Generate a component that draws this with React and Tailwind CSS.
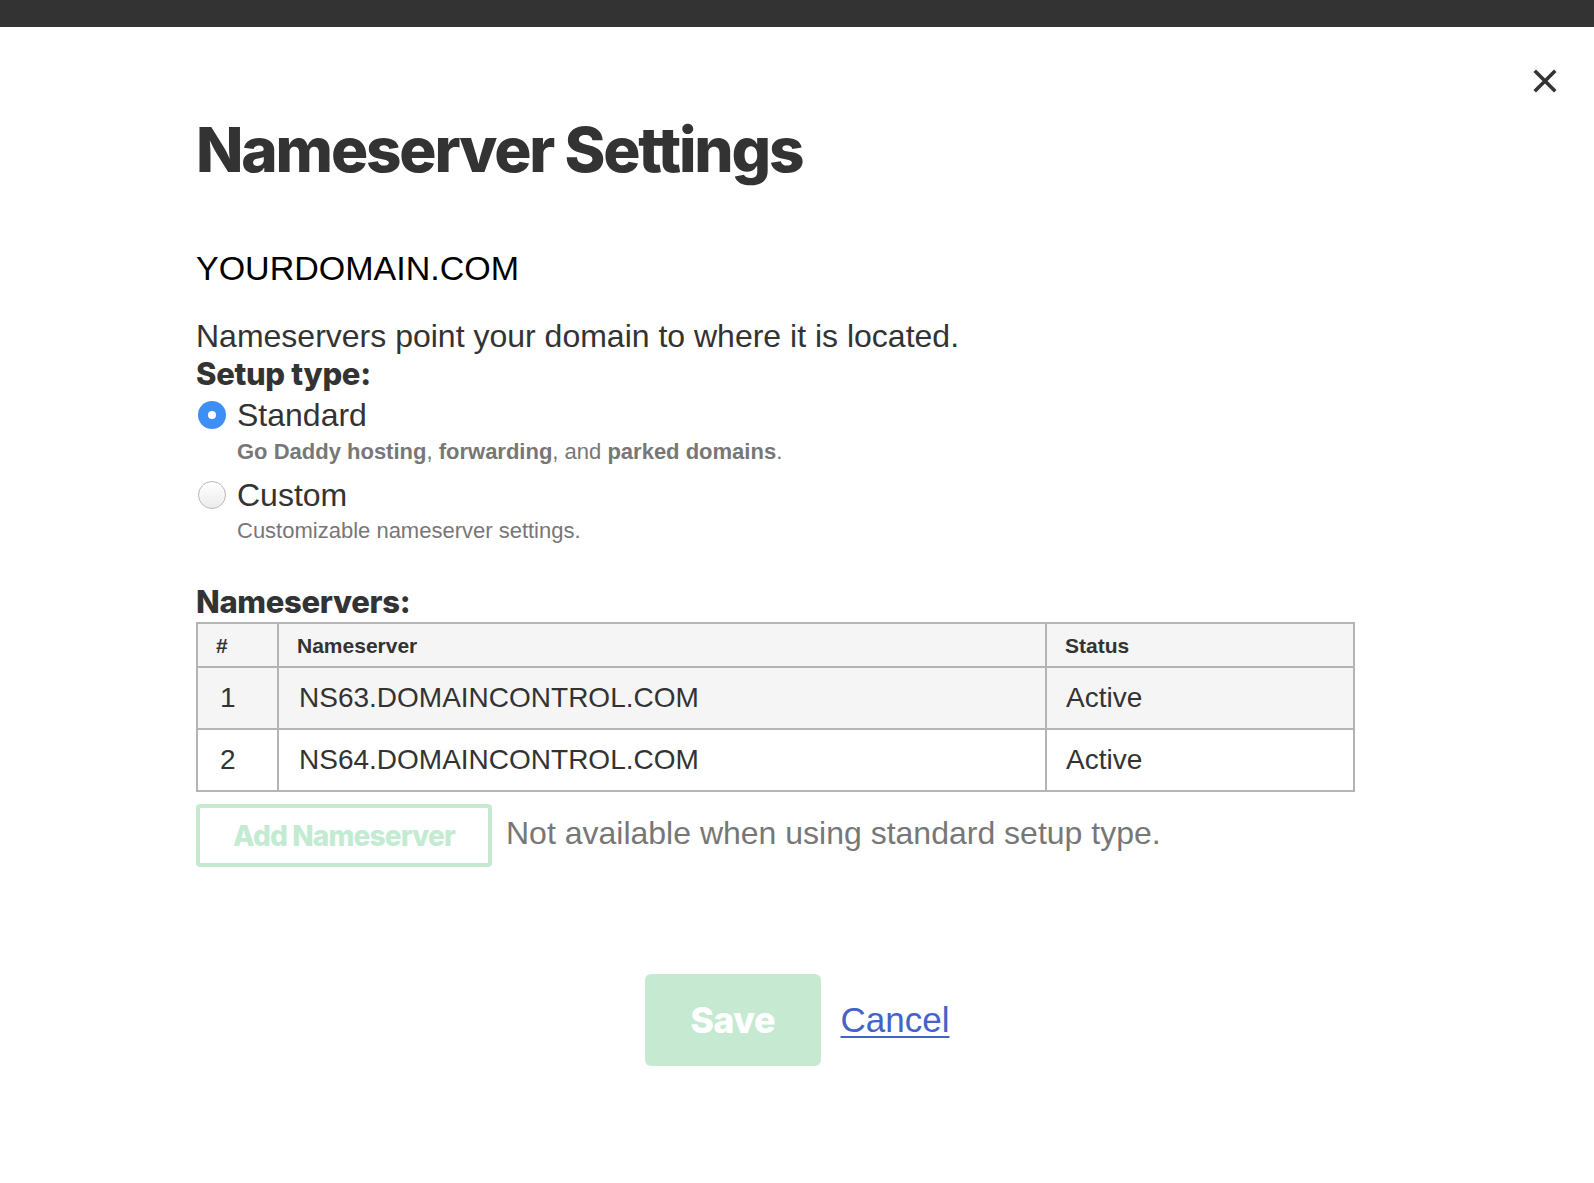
import React from "react";

const display = { fontFamily: "Inter, 'Noto Sans', sans-serif" };

function Radio({ checked }) {
  return checked ? (
    <span className="flex h-[28px] w-[28px] items-center justify-center rounded-full bg-[#3d8ff5]">
      <span className="h-[8px] w-[8px] rounded-full bg-white" />
    </span>
  ) : (
    <span className="block h-[28px] w-[28px] rounded-full border border-[#b9b9b9] bg-gradient-to-b from-white to-[#ececec]" />
  );
}

export default function App() {
  return (
    <div className="relative min-h-[1183px] w-full bg-white text-[#333]" style={{ fontFamily: "'Liberation Sans', Arial, sans-serif" }}>
      <div className="h-[27px] w-full bg-[#333]" />
      <button className="absolute right-[37px] top-[69px] text-[#333]" aria-label="Close">
        <svg width="24" height="24" viewBox="0 0 24 24" fill="none" stroke="currentColor" strokeWidth="3.6" strokeLinecap="square">
          <path d="M3 3 L21 21 M21 3 L3 21" />
        </svg>
      </button>

      <div className="px-[196px]">
        <h1 className="mt-[92px] text-[62px] font-extrabold leading-[1] tracking-[-0.035em] text-[#333]" style={display}>
          Nameserver Settings
        </h1>

        <div className="mt-[70px] text-[34px] leading-[1] text-black">YOURDOMAIN.COM</div>

        <p className="mt-[33px] text-[32px] leading-[1.15] text-[#333]">
          Nameservers point your domain to where it is located.
        </p>
        <div className="text-[31px] font-extrabold leading-[1.2] tracking-[-0.01em] text-[#333]" style={display}>
          Setup type:
        </div>

        <div className="mt-[6px] flex items-start gap-[11px] pl-[2px]">
          <div className="mt-[3px]"><Radio checked /></div>
          <div>
            <div className="text-[32px] leading-[1.1] text-[#333]">Standard</div>
            <div className="mt-[6px] text-[22px] leading-[1.2] text-[#777]">
              <b>Go Daddy hosting</b>, <b>forwarding</b>, and <b>parked domains</b>.
            </div>
          </div>
        </div>

        <div className="mt-[12px] flex items-start gap-[11px] pl-[2px]">
          <div className="mt-[3px]"><Radio /></div>
          <div>
            <div className="text-[32px] leading-[1.1] text-[#333]">Custom</div>
            <div className="mt-[5px] text-[22px] leading-[1.2] text-[#777]">Customizable nameserver settings.</div>
          </div>
        </div>

        <div className="mt-[39px] text-[31px] font-extrabold leading-[1.2] tracking-[-0.01em] text-[#333]" style={display}>
          Nameservers:
        </div>

        <table className="mt-[2px] w-[1159px] border-collapse border-2 border-[#b4b4b4] text-left">
          <thead>
            <tr className="h-[44px] bg-[#f5f5f5] text-[21px] font-bold text-[#333]">
              <th className="w-[81px] border-2 border-[#b4b4b4] pl-[18px] font-bold">#</th>
              <th className="w-[768px] border-2 border-[#b4b4b4] pl-[18px] font-bold">Nameserver</th>
              <th className="border-2 border-[#b4b4b4] pl-[18px] font-bold">Status</th>
            </tr>
          </thead>
          <tbody className="text-[28px] text-[#333]">
            <tr className="h-[62px] bg-[#f5f5f5]">
              <td className="border-2 border-[#b4b4b4] pl-[22px]">1</td>
              <td className="border-2 border-[#b4b4b4] pl-[20px]">NS63.DOMAINCONTROL.COM</td>
              <td className="border-2 border-[#b4b4b4] pl-[19px]">Active</td>
            </tr>
            <tr className="h-[62px] bg-white">
              <td className="border-2 border-[#b4b4b4] pl-[22px]">2</td>
              <td className="border-2 border-[#b4b4b4] pl-[20px]">NS64.DOMAINCONTROL.COM</td>
              <td className="border-2 border-[#b4b4b4] pl-[19px]">Active</td>
            </tr>
          </tbody>
        </table>

        <div className="mt-[12px] flex items-center gap-[14px]">
          <button
            className="flex h-[63px] w-[296px] items-center justify-center rounded-[4px] border-[4px] border-[#c6e9d1] bg-white text-[28px] font-extrabold tracking-[-0.03em] text-[#c3ebd2]"
            style={display}
          >
            Add Nameserver
          </button>
          <span className="-mt-[6px] text-[32px] text-[#777]">Not available when using standard setup type.</span>
        </div>

        <div className="mt-[107px] flex items-center justify-center gap-[20px]" style={{ marginLeft: -196, marginRight: -196 }}>
          <button
            className="flex h-[92px] w-[176px] items-center justify-center rounded-[6px] bg-[#c5e9d1] text-[36px] font-extrabold tracking-[-0.02em] text-white"
            style={display}
          >
            Save
          </button>
          <a href="#" className="text-[35px] text-[#4462c8] underline decoration-[2px] underline-offset-[4px]">Cancel</a>
        </div>
      </div>
    </div>
  );
}
